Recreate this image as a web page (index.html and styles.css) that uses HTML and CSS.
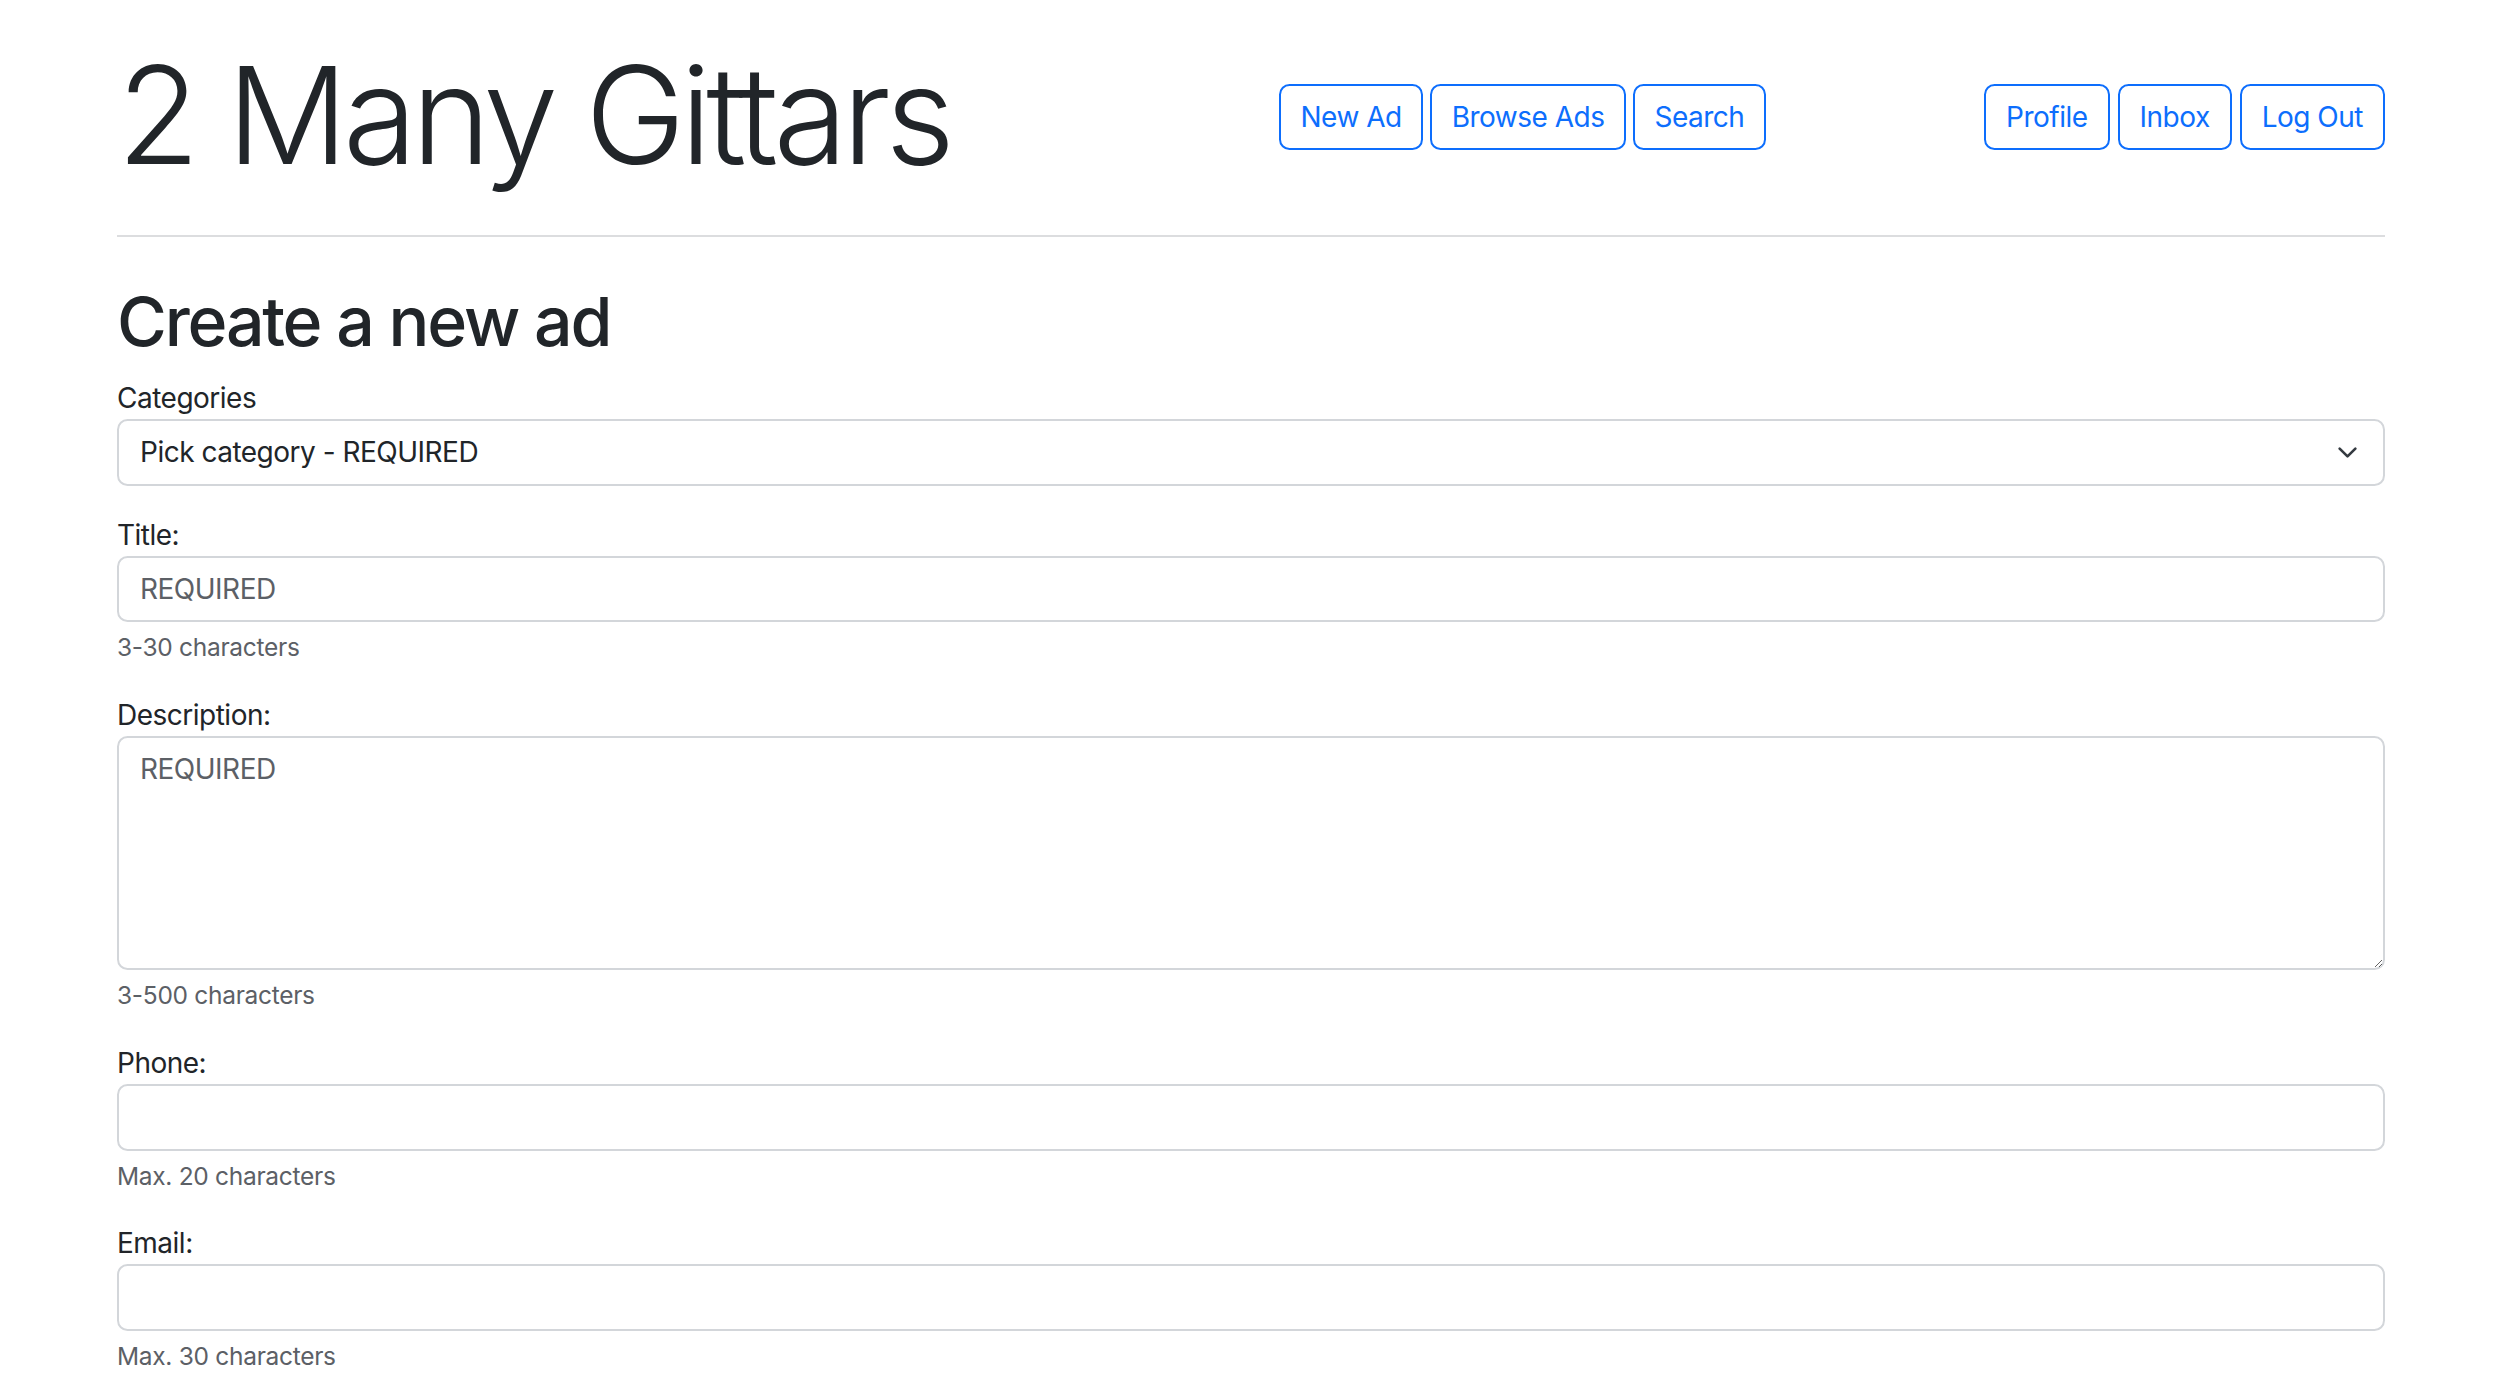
FILE: index.html
```html
<!DOCTYPE html>
<html lang="en">
<head>
<meta charset="utf-8">
<title>2 Many Gittars - Create a new ad</title>
<link rel="stylesheet" href="styles.css">
</head>
<body>
<div class="container">
  <header class="site-header">
    <h1 class="brand">2 Many Gittars</h1>
    <nav class="btn-group-nav">
      <a class="btn" href="#">New Ad</a>
      <a class="btn" href="#">Browse Ads</a>
      <a class="btn" href="#">Search</a>
    </nav>
    <nav class="btn-group-nav nav-right">
      <a class="btn" href="#">Profile</a>
      <a class="btn" href="#">Inbox</a>
      <a class="btn" href="#">Log Out</a>
    </nav>
  </header>
  <hr class="divider">
  <main>
    <h2 class="page-title">Create a new ad</h2>
    <form class="ad-form">
      <div class="field">
        <label for="cat">Categories</label>
        <div class="select-wrap">
          <select id="cat" class="form-control form-select">
            <option>Pick category - REQUIRED</option>
          </select>
          <svg class="chevron" viewBox="0 0 16 16" aria-hidden="true"><path d="m2 5 6 6 6-6" fill="none" stroke="#343a40" stroke-width="2" stroke-linecap="round" stroke-linejoin="round"/></svg>
        </div>
      </div>
      <div class="field">
        <label for="title">Title:</label>
        <input id="title" class="form-control" type="text" placeholder="REQUIRED">
        <div class="form-text">3-30 characters</div>
      </div>
      <div class="field">
        <label for="desc">Description:</label>
        <textarea id="desc" class="form-control" rows="5" placeholder="REQUIRED"></textarea>
        <div class="form-text">3-500 characters</div>
      </div>
      <div class="field">
        <label for="phone">Phone:</label>
        <input id="phone" class="form-control" type="text">
        <div class="form-text">Max. 20 characters</div>
      </div>
      <div class="field">
        <label for="email">Email:</label>
        <input id="email" class="form-control" type="text">
        <div class="form-text">Max. 30 characters</div>
      </div>
    </form>
  </main>
</div>
</body>
</html>
```

FILE: styles.css
```css
* { box-sizing: border-box; }

html, body {
  margin: 0;
  padding: 0;
  background: #ffffff;
}

body {
  font-family: Inter, "Liberation Sans", "Noto Sans", sans-serif;
  font-size: 28px;
  line-height: 42px;
  letter-spacing: -0.5px;
  color: #212529;
  overflow: hidden;
}

.container {
  width: 2268px;
  margin: 0 auto;
}

.site-header {
  display: flex;
  align-items: center;
  padding-top: 35px;
}

.brand {
  flex: 0 0 1162px;
  margin: 0;
  margin-top: -4px;
  font-size: 135px;
  line-height: 168px;
  font-weight: 300;
  letter-spacing: -5.5px;
  color: #212529;
}

.btn-group-nav {
  display: flex;
  gap: 7px;
}

.nav-right {
  margin-left: auto;
  gap: 8px;
}

.btn {
  display: inline-block;
  padding: 10.25px 19.5px;
  border: 2px solid #0d6efd;
  border-radius: 10.5px;
  color: #0d6efd;
  text-decoration: none;
  font-size: 28px;
  line-height: 42px;
  background: #fff;
}

.nav-right .btn {
  padding: 10.25px 20px;
}

.divider {
  margin: 36px 0 42px;
  border: 0;
  height: 2px;
  background: #dcdddf;
}

.page-title {
  margin: 0 0 14px;
  font-size: 68px;
  line-height: 84px;
  font-weight: 500;
  letter-spacing: -2.2px;
}

.ad-form {
  margin: 0;
}

.field {
  margin-bottom: 28px;
}

.field label {
  display: inline-block;
  color: #212529;
}

.form-control {
  display: block;
  width: 100%;
  margin: 0;
  padding: 10.25px 21px;
  font-family: inherit;
  font-size: 28px;
  line-height: 42px;
  letter-spacing: -0.5px;
  color: #212529;
  background: #fff;
  border: 2px solid #d3d6da;
  border-radius: 10.5px;
  outline: none;
}

.form-control::placeholder {
  color: #5c6066;
  opacity: 1;
}

textarea.form-control {
  resize: vertical;
  height: 234.5px;
}

.select-wrap {
  position: relative;
}

.form-select {
  -webkit-appearance: none;
  appearance: none;
  height: 66.5px;
  padding-right: 70px;
}

.chevron {
  position: absolute;
  right: 27px;
  top: 50%;
  width: 21px;
  height: 21px;
  margin-top: -10.5px;
  pointer-events: none;
}

.form-text {
  margin-top: 7px;
  font-size: 24.5px;
  line-height: 36.75px;
  letter-spacing: -0.3px;
  color: #5c6066;
}
```
